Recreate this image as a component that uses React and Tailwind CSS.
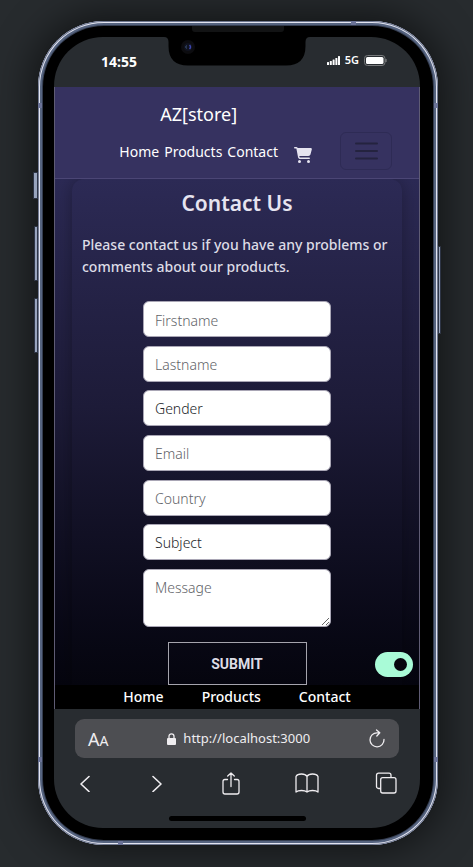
import React, { useState } from 'react';
import { FaCartShopping } from 'react-icons/fa6';

const sideButtons = [
  '-left-[5px] top-[151px] h-[27px] w-[5px]',
  '-left-[4px] top-[205px] h-[55px] w-[4px]',
  '-left-[4px] top-[277px] h-[55px] w-[4px]',
  '-right-[3px] top-[225px] h-[88px] w-[3px]',
];

const antennaBands = [
  'left-0 top-[82px] h-[5px] w-1',
  'right-0 top-[82px] h-[5px] w-1',
  'left-0 bottom-[83px] h-[5px] w-1',
  'right-0 bottom-[83px] h-[5px] w-1',
  'right-[82px] top-0 h-1 w-[5px]',
  'left-[80px] bottom-0 h-1 w-[5px]',
];

const fieldClass =
  'block h-9 w-full shrink-0 rounded-md border border-[#a9a6b5] bg-white px-[11px] pt-[2px] text-sm font-light text-[#212529] placeholder:text-[#5f6368] outline-none';

function Notch() {
  return (
    <svg
      className="absolute top-0 left-1/2 h-[29px] w-[146px] -translate-x-1/2"
      viewBox="0 0 146 29"
      aria-hidden="true"
    >
      <path d="M0 0H146Q141.500 0 141.500 5V9Q141.500 28.500 122 28.500H24Q4.500 28.500 4.500 9V5Q4.500 0 0 0Z" fill="#000" />
      <circle cx="24" cy="10" r="7" fill="#0c0c0f" />
      <circle cx="24" cy="10" r="4" fill="#10131f" />
      <path d="M22.500 8.500q-1.500 1.500 0 3" stroke="#3c5680" fill="none" />
      <path d="M25.500 8q2 2 0 4" stroke="#3d46b0" strokeWidth="1.500" fill="none" />
    </svg>
  );
}

function StatusBar() {
  return (
    <div className="relative flex h-[50px] items-center justify-between pr-[33px] pl-[47px] text-white">
      <span className="text-sm font-bold">14:55</span>
      <Notch />
      <div className="flex items-center gap-[5px] pb-1">
        <svg className="h-[9px] w-[13px]" viewBox="0 0 13 9" fill="#fff" aria-hidden="true">
          <rect x="0" y="6" width="2" height="3" rx=".5" />
          <rect x="2.800" y="5" width="2" height="4" rx=".5" />
          <rect x="5.600" y="3.500" width="2" height="5.500" rx=".5" />
          <rect x="8.400" y="2" width="2" height="7" rx=".5" />
          <rect x="11" y="0" width="2" height="9" rx=".5" />
        </svg>
        <span className="text-[11px] leading-3 font-semibold">5G</span>
        <svg className="h-[11px] w-[23px]" viewBox="0 0 23 11" aria-hidden="true">
          <rect x=".5" y=".5" width="20.500" height="10" rx="3" fill="none" stroke="#77797b" />
          <rect x="2" y="2" width="17.500" height="7" rx="1.500" fill="#fff" />
          <path d="M22 4v3" stroke="#8b8d8f" />
        </svg>
      </div>
    </div>
  );
}

function SiteHeader() {
  return (
    <header className="flex items-end justify-end border-b border-[#4b4675] bg-[#363260] pt-[13px] pr-[27px] pb-2 text-white">
      <div className="flex flex-col items-center gap-1">
        <a href="#home" className="text-lg leading-7">AZ[store]</a>
        <nav className="flex h-[38px] items-center gap-[5px] pt-[2px] text-sm">
          <a href="#home">Home</a>
          <a href="#products">Products</a>
          <a href="#contact">Contact</a>
        </nav>
      </div>
      <a href="#cart" aria-label="Cart" className="ml-4 flex h-[38px] items-center pt-2 text-[#e6e4f0]">
        <FaCartShopping className="h-4 w-[18px]" />
      </a>
      <button
        type="button"
        aria-label="Toggle navigation"
        className="ml-7 flex h-[38px] w-[52px] items-center justify-center rounded-md border border-[#2e2b55]"
      >
        <svg className="h-[18px] w-[23px]" viewBox="0 0 23 18" aria-hidden="true">
          <path d="M1 1.500H22M1 9H22M1 16.500H22" stroke="#24233f" strokeWidth="2" strokeLinecap="round" />
        </svg>
      </button>
    </header>
  );
}

function ContactForm() {
  return (
    <form className="flex flex-col items-center" onSubmit={(e) => e.preventDefault()}>
      <div className="mt-[23px] flex h-[326px] w-[188px] flex-col justify-between">
        <input className={fieldClass} aria-label="Firstname" placeholder="Firstname" />
        <input className={fieldClass} aria-label="Lastname" placeholder="Lastname" />
        <select className={`${fieldClass} appearance-none`} aria-label="Gender" defaultValue="">
          <option value="">Gender</option>
          <option>Female</option>
          <option>Male</option>
        </select>
        <input className={fieldClass} type="email" aria-label="Email" placeholder="Email" />
        <input className={fieldClass} aria-label="Country" placeholder="Country" />
        <select className={`${fieldClass} appearance-none`} aria-label="Subject" defaultValue="">
          <option value="">Subject</option>
          <option>Question</option>
          <option>Problem</option>
        </select>
        <textarea
          className="block h-[58px] w-full resize rounded-md border border-[#a9a6b5] bg-white px-[11px] py-[7px] text-sm leading-[22px] font-light text-[#212529] outline-none placeholder:text-[#5f6368]"
          aria-label="Message"
          placeholder="Message"
        />
      </div>
      <button
        type="submit"
        className="mt-[15px] h-[43px] w-[139px] border border-[#a5a4ad] font-['Roboto',sans-serif] text-sm font-bold text-[#dddce6]"
      >
        SUBMIT
      </button>
    </form>
  );
}

function ThemeSwitch() {
  const [dark, setDark] = useState(true);
  return (
    <label className="absolute right-[6px] bottom-2 block h-[25px] w-[38px] cursor-pointer">
      <input
        type="checkbox"
        role="switch"
        aria-label="Dark mode"
        checked={dark}
        onChange={() => setDark(!dark)}
        className="peer block h-full w-full cursor-pointer appearance-none rounded-full bg-[#a9fbd7]"
      />
      <span className="pointer-events-none absolute top-[6px] left-[6px] h-[13px] w-[13px] rounded-full bg-[#07070f] peer-checked:left-[19px]" />
    </label>
  );
}

function BrowserBar() {
  return (
    <div className="px-[21px] pt-[10px] text-[#efedf0]">
      <div className="flex h-[39px] items-center justify-between rounded-[9px] bg-[#4d4e52] pr-[14px] pl-[13px]">
        <button type="button" aria-label="Text size" className="leading-5">
          <span className="text-lg">A</span>
          <span className="text-sm">A</span>
        </button>
        <div className="flex items-center gap-[7px] text-[13px]">
          <svg className="h-3 w-[9px]" viewBox="0 0 9 12" aria-hidden="true">
            <rect x="0" y="5" width="9" height="7" rx="1" fill="currentColor" />
            <path d="M2 5.500V3.300a2.500 2.500 0 0 1 5 0V5.500" fill="none" stroke="currentColor" strokeWidth="1.300" />
          </svg>
          <span>http://localhost:3000</span>
        </div>
        <button type="button" aria-label="Reload">
          <svg className="h-[19px] w-4" viewBox="0 0 16 19" fill="none" stroke="currentColor" strokeWidth="1.300" strokeLinecap="round" strokeLinejoin="round" aria-hidden="true">
            <path d="M15 10.500A7 7 0 1 1 8 3.800H10.500M7.500 1l3.300 2.800L7.800 7" />
          </svg>
        </button>
      </div>
      <div className="flex h-[50px] items-center justify-between pr-[2px] pl-[5px]">
        <button type="button" aria-label="Back">
          <svg className="h-[18px] w-[14px]" viewBox="0 0 14 18" fill="none" stroke="currentColor" strokeWidth="1.600" strokeLinecap="round" strokeLinejoin="round" aria-hidden="true">
            <path d="M9 2.500L1 10l8 7.500" />
          </svg>
        </button>
        <button type="button" aria-label="Forward">
          <svg className="h-[18px] w-4" viewBox="0 0 16 18" fill="none" stroke="currentColor" strokeWidth="1.600" strokeLinecap="round" strokeLinejoin="round" aria-hidden="true">
            <path d="M3 2.500l8 7.500-8 7.500" />
          </svg>
        </button>
        <button type="button" aria-label="Share">
          <svg className="h-[23px] w-[18px]" viewBox="0 0 18 23" fill="none" stroke="currentColor" strokeWidth="1.300" strokeLinecap="round" strokeLinejoin="round" aria-hidden="true">
            <path d="M5.500 7.500H3a2 2 0 0 0-2 2V20a2 2 0 0 0 2 2H15a2 2 0 0 0 2-2V9.500a2 2 0 0 0-2-2H12.500M9 14.500V1M5.700 4L9 1l3.300 3" />
          </svg>
        </button>
        <button type="button" aria-label="Bookmarks">
          <svg className="h-5 w-6" viewBox="0 0 24 20" fill="none" stroke="currentColor" strokeWidth="1.300" strokeLinecap="round" strokeLinejoin="round" aria-hidden="true">
            <path d="M12 3.500C10.500 1 8.500 1 6.500 1S2 1.500 1 3.500V19c1.500-1.300 3.500-1.500 5.500-1.500S10.500 17.700 12 19c1.500-1.300 3.500-1.500 5.500-1.500s4 .2 5.500 1.500V3.500C22 1.500 19.500 1 17.500 1S13.500 1 12 3.500ZM12 3.500V19" />
          </svg>
        </button>
        <button type="button" aria-label="Tabs">
          <svg className="h-[22px] w-[22px]" viewBox="0 0 22 22" fill="none" stroke="currentColor" strokeWidth="1.300" strokeLinejoin="round" aria-hidden="true">
            <rect x="5.700" y="5.700" width="15.300" height="15.300" rx="2" />
            <path d="M5.700 16.500H3.500a2 2 0 0 1-2-2V3.200a2 2 0 0 1 2-2H14a2 2 0 0 1 2 2V5.700" />
          </svg>
        </button>
      </div>
      <div className="mx-auto mt-2 mb-[7px] h-[5px] w-[137px] rounded-full bg-black" />
    </div>
  );
}

export default function App() {
  return (
    <div className="min-h-screen bg-[#272b2e] pt-[21px] pr-[35px] pb-[22px] pl-[38px] font-['Segoe_UI','Noto_Sans','Open_Sans',sans-serif]">
      <div className="relative rounded-[66px] bg-black pt-4 pr-[18px] pb-[17px] pl-4 shadow-[0_0_36px_8px_rgba(0,0,0,0.5),inset_0_0_0_1px_#6f7890,inset_0_0_0_2px_#e2e4f0,inset_0_0_0_4px_#566480,inset_0_0_0_5px_#343d50]">
        {sideButtons.map((place) => (
          <span key={place} className={`absolute rounded-[1px] border border-[#2d3445] bg-[#98a4bd] ${place}`} />
        ))}
        {antennaBands.map((place) => (
          <span key={place} className={`absolute bg-[#6b7398] ${place}`} />
        ))}
        <span className="absolute top-[5px] left-1/2 h-[6px] w-[92px] -translate-x-1/2 rounded-b-[3px] bg-[#121314]" />
        <div className="overflow-hidden rounded-[49px] bg-[#282c30]">
          <StatusBar />
          <div className="border-x border-[#5f5c74]">
            <SiteHeader />
            <div className="relative overflow-hidden bg-linear-to-b from-[#2c2a55] via-[#1d1b38] via-45% to-[#05050e]">
              <main className="mx-[17px] rounded-t-xl px-[10px] pt-[10px] shadow-[0_0_18px_rgba(0,0,0,0.3)]">
                <h1 className="text-center text-[21px] leading-7 font-semibold text-[#e6e4f0]">Contact Us</h1>
                <p className="mt-[17px] text-sm leading-[22px] font-medium text-[#dddce6]">
                  Please contact us if you have any problems or comments about our products.
                </p>
                <ContactForm />
              </main>
              <ThemeSwitch />
            </div>
            <footer className="flex h-6 items-center justify-center gap-[38px] bg-black text-sm font-medium text-white">
              <a href="#home">Home</a>
              <a href="#products">Products</a>
              <a href="#contact">Contact</a>
            </footer>
          </div>
          <BrowserBar />
        </div>
      </div>
    </div>
  );
}
